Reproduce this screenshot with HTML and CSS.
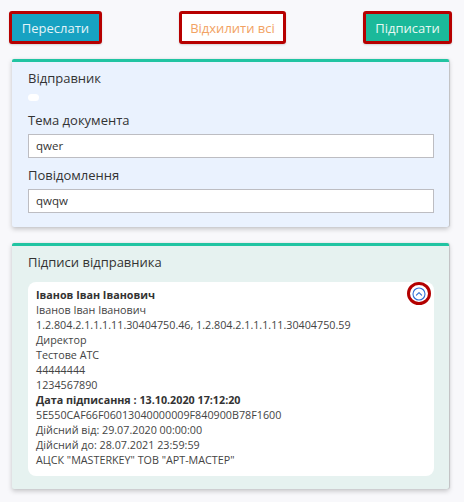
FILE: index.html
```html
<!DOCTYPE html>
<html lang="uk">
<head>
<meta charset="utf-8">
<title>Підписання</title>
<link rel="stylesheet" href="styles.css">
</head>
<body>
<div class="actions">
  <button class="btn btn-forward">Переслати</button>
  <button class="btn btn-reject">Відхилити всі</button>
  <button class="btn btn-sign">Підписати</button>
</div>

<section class="card card-doc">
  <div class="label">Відправник</div>
  <div class="pill"></div>
  <div class="label">Тема документа</div>
  <div class="input">qwer</div>
  <div class="label">Повідомлення</div>
  <div class="input">qwqw</div>
</section>

<section class="card card-sign">
  <div class="label">Підписи відправника</div>
  <div class="sig">
    <span class="toggle">
      <svg width="14" height="14" viewBox="0 0 14 14"><circle cx="7" cy="7" r="6" fill="none" stroke="#2f6fd6" stroke-width="1.1"/><path d="M4.4 8.2 L7 5.6 L9.6 8.2" fill="none" stroke="#2f6fd6" stroke-width="1.1" stroke-linecap="round" stroke-linejoin="round"/></svg>
    </span>
    <div class="b">Іванов Іван Іванович</div>
    <div>Іванов Іван Іванович</div>
    <div>1.2.804.2.1.1.1.11.30404750.46, 1.2.804.2.1.1.1.11.30404750.59</div>
    <div>Директор</div>
    <div>Тестове АТС</div>
    <div>44444444</div>
    <div>1234567890</div>
    <div class="b">Дата підписання : 13.10.2020 17:12:20</div>
    <div>5E550CAF66F06013040000009F840900B78F1600</div>
    <div>Дійсний від: 29.07.2020 00:00:00</div>
    <div>Дійсний до: 28.07.2021 23:59:59</div>
    <div>АЦСК "MASTERKEY" ТОВ "АРТ-МАСТЕР"</div>
  </div>
</section>
</body>
</html>
```

FILE: styles.css
```css
* { box-sizing: border-box; }
html, body { margin: 0; padding: 0; }
body {
  background: #f8f8fb;
  font-family: "Open Sans", "Noto Sans", sans-serif;
  color: #333;
  width: 464px;
  height: 502px;
  overflow: hidden;
}
.actions {
  display: flex;
  justify-content: space-between;
  padding: 11px 12px 0 9px;
  height: 59px;
}
.btn {
  height: 33px;
  border: 3px solid #b70000;
  border-radius: 3px;
  font-family: inherit;
  font-size: 13px;
  padding: 0;
  box-shadow: 0 1px 2px rgba(0,0,0,0.15);
}
.btn-forward { width: 93px; background: #17a2c2; color: #e4f4f8; }
.btn-reject { width: 107px; background: #fff; color: #f2a263; }
.btn-sign { width: 89px; background: #1bb99a; color: #e6f8f3; }

.card {
  margin: 0 15px 0 12px;
  border-top: 3px solid #21c4a2;
  box-shadow: 0 2px 5px rgba(0,0,0,0.22), 1px 0 1px rgba(0,0,0,0.15);
  border-radius: 2px;
  padding: 7px 15px 15px 16px;
}
.card-doc { background: #eaf2fe; height: 168px; }
.card-sign { background: #e6f2f0; margin-top: 16px; height: 246px; padding-bottom: 13px; }

.label {
  font-size: 13px;
  line-height: 18px;
  color: #333;
}
.pill {
  width: 11px;
  height: 7px;
  border-radius: 4px;
  background: #fff;
  margin: 7px 0 10px;
}
.input {
  height: 24px;
  margin: 5px 0 8px;
  background: #fff;
  border: 1px solid #bdbdc2;
  font-size: 11.5px;
  line-height: 22px;
  padding-left: 7px;
  color: #333;
}
.sig {
  position: relative;
  margin-top: 11px;
  background: #fff;
  border-radius: 8px;
  padding: 6px 8px 8px;
  font-size: 10.75px;
  line-height: 15px;
  color: #444;
}
.sig .b { font-weight: 700; color: #333; }
.toggle {
  position: absolute;
  top: 0;
  right: 3px;
  width: 24px;
  height: 23px;
  border: 3px solid #b30000;
  border-radius: 50%;
  display: flex;
  align-items: center;
  justify-content: center;
}
.toggle svg { display: block; }
```
